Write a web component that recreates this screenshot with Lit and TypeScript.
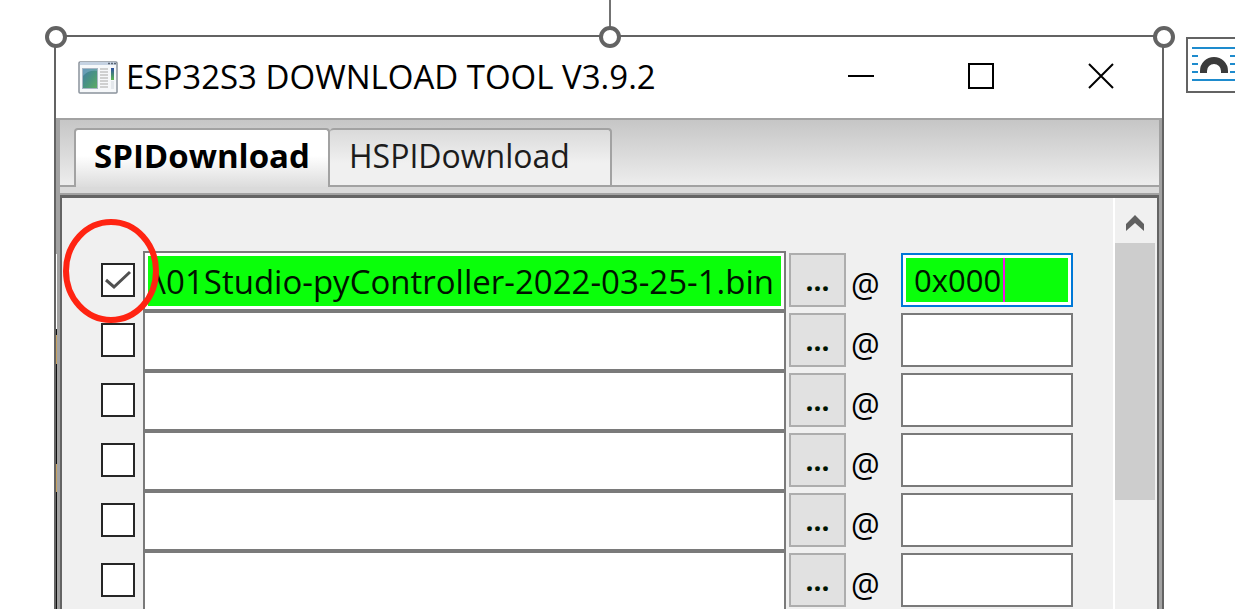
import { LitElement, html, css, svg, nothing } from "lit";
import { customElement, state } from "lit/decorators.js";
import { classMap } from "lit/directives/class-map.js";

interface FlashEntry {
  enabled: boolean;
  file: string;
  address: string;
}

@customElement("flash-row")
class FlashRow extends LitElement {
  static properties = { entry: { attribute: false }, index: { type: Number } };
  declare entry: FlashEntry;
  declare index: number;

  static styles = css`
    :host {
      display: flex;
      align-items: flex-start;
      height: 60px;
      padding: 0 40px 0 39px;
      color: #000;
    }
    * { box-sizing: border-box; }
    input, button {
      margin: 0;
      border-radius: 0;
      outline: none;
      font: 31px/40px "Open Sans", "Noto Sans", sans-serif;
      color: #001400;
    }
    .pick {
      position: relative;
      flex: none;
      display: block;
      width: 34px;
      height: 34px;
      margin: 12px 8px 0 0;
    }
    .tick {
      appearance: none;
      display: block;
      width: 34px;
      height: 34px;
      border: 2px solid #262626;
      background: #fff;
    }
    .mark {
      position: absolute;
      inset: 0;
      pointer-events: none;
    }
    .ring {
      position: absolute;
      z-index: 2;
      left: -38px;
      top: -44px;
      width: 96px;
      height: 104px;
      pointer-events: none;
    }
    .file {
      flex: 1;
      min-width: 0;
      height: 60px;
      padding: 3px;
      border: 2px solid #7a7a7a;
      background: #fff;
    }
    .file input, .address input {
      display: block;
      width: 100%;
      height: 100%;
      padding: 0 8px;
      border: 0;
      background: #fff;
    }
    .file input {
      padding: 0 4px 0 6px;
      font-size: 33px;
    }
    .file.loaded input, .address.loaded input { background: #0aff0a; }
    .browse {
      flex: none;
      width: 57px;
      height: 54px;
      margin: 2px 5px 0 3px;
      padding: 0;
      border: 2px solid #adadad;
      background: #e1e1e1;
      font-weight: 700;
      font-size: 28px;
      text-align: center;
    }
    .at {
      flex: none;
      width: 50px;
      margin-top: 14px;
      font: 32px/40px "Open Sans", "Noto Sans", sans-serif;
    }
    .address {
      position: relative;
      flex: none;
      width: 172px;
      height: 54px;
      margin-top: 2px;
      padding: 3px;
      border: 2px solid #7a7a7a;
      background: #fff;
    }
    .address.loaded { border-color: #0078d7; }
    .caret {
      position: absolute;
      left: 100px;
      top: 3px;
      bottom: 3px;
      width: 2px;
      background: #f012e8;
    }
  `;

  render() {
    const e = this.entry;
    const loaded = { loaded: e.enabled };
    return html`
      <label class="pick">
        <input class="tick" type="checkbox" .checked=${e.enabled} aria-label="Enable file ${this.index + 1}" />
        ${e.enabled
          ? html`
              <svg class="mark" viewBox="0 0 34 34" aria-hidden="true">
                <path d="M5 17 L13 24 L29 9" fill="none" stroke="#505050" stroke-width="3" />
              </svg>
              <svg class="ring" viewBox="0 0 96 104" aria-hidden="true">
                <ellipse cx="48" cy="52" rx="45" ry="49" fill="none" stroke="#ff2412" stroke-width="6" />
              </svg>`
          : nothing}
      </label>
      <div class="file ${classMap(loaded)}">
        <input type="text" .value=${e.file} aria-label="File ${this.index + 1}" spellcheck="false" />
      </div>
      <button class="browse" type="button" aria-label="Browse">...</button>
      <span class="at">@</span>
      <div class="address ${classMap(loaded)}">
        <input type="text" .value=${e.address} aria-label="Address ${this.index + 1}" />
        ${e.enabled ? html`<span class="caret"></span>` : nothing}
      </div>
    `;
  }
}

@customElement("app-root")
class AppRoot extends LitElement {
  @state() private entries: FlashEntry[] = [
    { enabled: true, file: "\\01Studio-pyController-2022-03-25-1.bin", address: "0x000" },
    ...Array.from({ length: 5 }, () => ({ enabled: false, file: "", address: "" })),
  ];

  static styles = css`
    :host {
      display: flex;
      align-items: stretch;
      height: 100vh;
      padding: 35px 0 0 54px;
      box-sizing: border-box;
      overflow: hidden;
      background: #fff;
      color: #000;
      font-family: "Open Sans", "Noto Sans", sans-serif;
    }
    * { box-sizing: border-box; }
    button {
      margin: 0;
      padding: 0;
      border: 0;
      background: none;
      color: inherit;
      font-family: inherit;
    }
    svg { display: block; }
    .picture {
      position: relative;
      flex: 1;
      min-width: 0;
      display: flex;
      flex-direction: column;
      border: 2px solid #636363;
      border-bottom: 0;
    }
    .handle {
      position: absolute;
      z-index: 3;
      top: -11px;
      width: 22px;
      height: 22px;
      border: 4px solid #636363;
      border-radius: 50%;
      background: #fff;
    }
    .nw { left: -11px; }
    .n { left: calc(50% - 10px); }
    .ne { right: -13px; }
    .stem {
      position: absolute;
      left: 50%;
      top: -37px;
      width: 2px;
      height: 28px;
      background: #737373;
    }
    .titlebar {
      flex: none;
      display: flex;
      align-items: flex-start;
      height: 81px;
      padding: 0 0 0 22px;
      background: #fff;
    }
    .titlebar > svg { margin-top: 23px; }
    .title {
      flex: 1;
      margin: 18px 0 0 8px;
      font-size: 33px;
      line-height: 44px;
      font-weight: 400;
      white-space: nowrap;
    }
    .control {
      flex: none;
      display: grid;
      place-items: center;
      width: 120px;
      height: 78px;
    }
    .control:last-child { margin-right: 1px; }
    .client {
      flex: 1;
      min-height: 0;
      display: flex;
      flex-direction: column;
      border: 3px solid #a2a2a2;
      border-left-width: 4px;
      border-top-width: 2px;
      border-bottom: 0;
      background: #dadada;
    }
    .tabs {
      flex: none;
      display: flex;
      align-items: flex-end;
      height: 67px;
      padding-left: 14px;
      background: linear-gradient(#c6c6c6, #ededed);
      border-bottom: 2px solid #a2a2a2;
    }
    .tab {
      flex: none;
      height: 57px;
      border: 2px solid #a2a2a2;
      border-bottom: 0;
      border-radius: 4px 4px 0 0;
      font-size: 32px;
      line-height: 40px;
      text-align: left;
      white-space: nowrap;
      padding: 0 18px 3px 19px;
      width: 282px;
      border-left: 0;
      background: linear-gradient(#dadada, #f0f0f0 60%);
      color: #1c1c1c;
    }
    .tab.active {
      width: 256px;
      height: 59px;
      margin-bottom: -2px;
      padding: 0 18px 5px;
      border-left: 2px solid #a2a2a2;
      background: linear-gradient(#fff 45%, #dcdcdc);
      color: #000;
      font-weight: 700;
      font-size: 33px;
    }
    .panel {
      flex: 1;
      min-height: 0;
      display: flex;
      margin-top: 8px;
      border: 2px solid #646464;
      border-bottom: 0;
      border-top-width: 3px;
      background: #f0f0f0;
      box-shadow: 0 -2px 0 #a2a2a2;
    }
    .rows {
      flex: 1;
      min-width: 0;
      padding-top: 53px;
    }
    .scrollbar {
      flex: none;
      width: 44px;
      padding-right: 2px;
      border-left: 2px solid #fff;
      background: #f0f0f0;
    }
    .up {
      display: grid;
      place-items: center;
      width: 100%;
      height: 45px;
      padding-top: 4px;
    }
    .thumb {
      height: 257px;
      background: #cdcdcd;
    }
    .side {
      flex: none;
      width: 71px;
      padding: 2px 0 0 22px;
      overflow: hidden;
    }
    .layout {
      display: block;
      width: 56px;
      height: 56px;
      border: 2px solid #636363;
      background: #fff;
    }
    .backdrop {
      position: absolute;
      left: 0;
      top: 217px;
      bottom: 0;
      width: 1px;
      background: linear-gradient(#fff 75px, #111 75px 81px, #c8a260 81px 110px, #111 110px 210px, #c8a260 210px 238px, #111 238px);
    }
  `;

  private appIcon = svg`
    <svg width="40" height="34" viewBox="0 0 40 34" aria-hidden="true">
      <defs>
        <linearGradient id="screen" x1="0" y1="0" x2="1" y2="1">
          <stop offset="0" stop-color="#4279a8" />
          <stop offset="0.55" stop-color="#4a957f" />
          <stop offset="1" stop-color="#5fae62" />
        </linearGradient>
        <linearGradient id="meter" x1="0" y1="0" x2="0" y2="1">
          <stop offset="0" stop-color="#2d4fa0" />
          <stop offset="1" stop-color="#5cb850" />
        </linearGradient>
      </defs>
      <rect x="1" y="2" width="38" height="31" rx="1" fill="#f6f8fa" stroke="#8a929c" stroke-width="1.5" />
      <rect x="2" y="2" width="36" height="3" fill="#c5d2e2" />
      <path d="M30 3.5h2M33 3.5h2M36 3.5h2" stroke="#5b6675" stroke-width="1.5" />
      <rect x="4.500" y="8.500" width="15" height="20" fill="url(#screen)" stroke="#a8b6c4" />
      <path d="M5 16Q10 10 19 11V9H5z" fill="#8ab8d0" opacity="0.5" />
      <path d="M22 9h8M22 12h8M22 15h8M22 18h8M22 21h8M22 24h8M22 27h8" stroke="#c2c2c2" stroke-width="1.5" />
      <rect x="33" y="8" width="3" height="12" fill="url(#meter)" />
      <rect x="33" y="21" width="3" height="8" fill="#e4e8ec" />
    </svg>`;

  render() {
    return html`
      <main class="picture">
        <span class="stem"></span>
        <span class="handle nw"></span>
        <span class="handle n"></span>
        <span class="handle ne"></span>
        <header class="titlebar">
          ${this.appIcon}
          <h1 class="title">ESP32S3 DOWNLOAD TOOL V3.9.2</h1>
          <button class="control" type="button" aria-label="Minimize">
            <svg width="26" height="26" viewBox="0 0 26 26"><path d="M0 13h26" stroke="#000" stroke-width="2" /></svg>
          </button>
          <button class="control" type="button" aria-label="Maximize">
            <svg width="26" height="26" viewBox="0 0 26 26"><rect x="1" y="1" width="24" height="24" fill="none" stroke="#000" stroke-width="2" /></svg>
          </button>
          <button class="control" type="button" aria-label="Close">
            <svg width="26" height="26" viewBox="0 0 26 26"><path d="M1 1L25 25M25 1L1 25" stroke="#000" stroke-width="2" /></svg>
          </button>
        </header>
        <section class="client">
          <nav class="tabs" role="tablist">
            <button class="tab active" type="button" role="tab" aria-selected="true">SPIDownload</button>
            <button class="tab" type="button" role="tab" aria-selected="false">HSPIDownload</button>
          </nav>
          <div class="panel">
            <div class="rows">
              ${this.entries.map((entry, i) => html`<flash-row .entry=${entry} .index=${i}></flash-row>`)}
            </div>
            <div class="scrollbar">
              <button class="up" type="button" aria-label="Scroll up">
                <svg width="20" height="16" viewBox="0 0 20 16"><path d="M1 9L10 0L19 9V16L10 8L1 16Z" fill="#606060" /></svg>
              </button>
              <div class="thumb"></div>
            </div>
          </div>
        </section>
        <span class="backdrop"></span>
      </main>
      <aside class="side">
        <button class="layout" type="button" aria-label="Layout options">
          <svg width="52" height="52" viewBox="0 0 52 52">
            <path d="M4 9h44M4 41h44M4 17h6M4 25h6M4 33h6M42 17h6M42 25h6M42 33h6" stroke="#1e8bcd" stroke-width="2" />
            <path d="M15.500 34v-2a10.500 10.500 0 0 1 21 0v2" fill="none" stroke="#3b3b3b" stroke-width="7" />
          </svg>
        </button>
      </aside>
    `;
  }
}
